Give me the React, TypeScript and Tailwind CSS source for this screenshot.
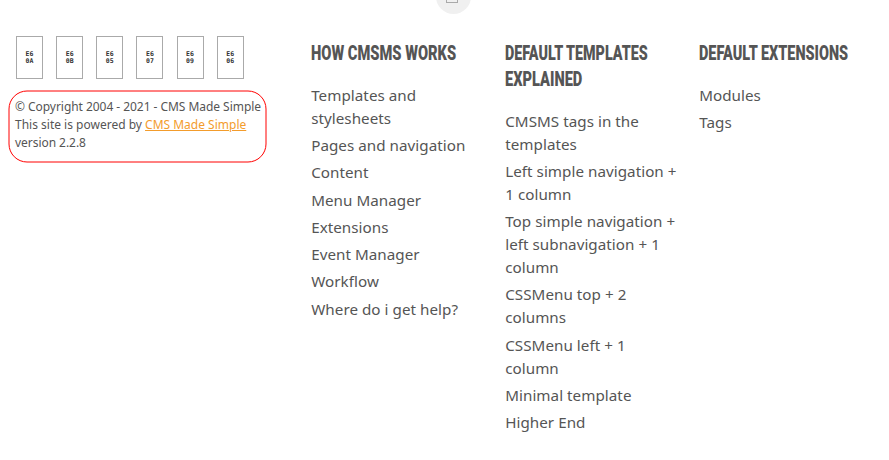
const socials = ['0A', '0B', '05', '07', '09', '06'];

const columns = [
  {
    title: [{ text: 'HOW CMSMS WORKS', scale: 'scale-x-[0.733]' }],
    links: ['Templates and stylesheets', 'Pages and navigation', 'Content', 'Menu Manager', 'Extensions', 'Event Manager', 'Workflow', 'Where do i get help?'],
  },
  {
    title: [
      { text: 'DEFAULT TEMPLATES', scale: 'scale-x-[0.716]' },
      { text: 'EXPLAINED', scale: 'scale-x-[0.73]' },
    ],
    links: ['CMSMS tags in the templates', 'Left simple navigation + 1 column', 'Top simple navigation + left subnavigation + 1 column', 'CSSMenu top + 2 columns', 'CSSMenu left + 1 column', 'Minimal template', 'Higher End'],
  },
  {
    title: [{ text: 'DEFAULT EXTENSIONS', scale: 'scale-x-[0.722]' }],
    links: ['Modules', 'Tags'],
  },
];

export default function App() {
  return (
    <footer className="relative h-[460px] w-[889px] overflow-hidden bg-white font-['Noto_Sans',sans-serif] text-[#555]">
      <a className="absolute left-[436px] top-[-21px] size-[35px] overflow-hidden rounded-full bg-[#f0f0f0]">
        <span className="absolute left-[10px] top-[5px] h-[19px] w-[12px] border border-[#aaa]" />
      </a>
      <div className="flex pt-9">
        <section className="w-[311px] shrink-0 pl-2">
          <ul className="flex h-[54px] pl-2">
            {socials.map((s) => (
              <li key={s} className="w-[40.15px]">
                <span className="flex h-[43px] w-[27px] flex-col border border-[#aaa] pl-[8.5px] pt-[14px] font-['DejaVu_Sans_Mono',monospace] text-[6.5px] font-bold leading-[7px] tracking-[0.1px] text-[#333]">
                  <span>E6</span>
                  <span>{s}</span>
                </span>
              </li>
            ))}
          </ul>
          <div className="relative h-[73px] w-[259px] whitespace-nowrap pl-[7px] pt-2 text-[12px] leading-[18px]">
            <svg className="absolute left-0 top-0" width="259" height="73" fill="none" stroke="#f00">
              <rect x="1" y="1" width="257" height="71" rx="18" />
            </svg>
            <p className="tracking-[-0.045px]">© Copyright 2004 - 2021 - CMS Made Simple</p>
            <p>This site is powered by <a className="text-[#f39c2c] underline">CMS Made Simple</a></p>
            <p className="tracking-[-0.045px]">version 2.2.8</p>
          </div>
        </section>
        {columns.map((c) => (
          <nav key={c.title[0].text} className="w-[194px] shrink-0 pr-[18px] pt-[4.8px]">
            <h3 className="mb-[17.35px] whitespace-nowrap font-['Roboto',sans-serif] text-[20px] font-black leading-[25.75px]">
              {c.title.map((t) => (
                <span key={t.text} className={`block w-max origin-left ${t.scale}`}>{t.text}</span>
              ))}
            </h3>
            <ul className="pl-[0.2px] text-[15.2px] leading-[23px] tracking-[0.04px]">
              {c.links.map((l) => <li key={l} className="mb-[4.25px]">{l}</li>)}
            </ul>
          </nav>
        ))}
      </div>
    </footer>
  );
}
